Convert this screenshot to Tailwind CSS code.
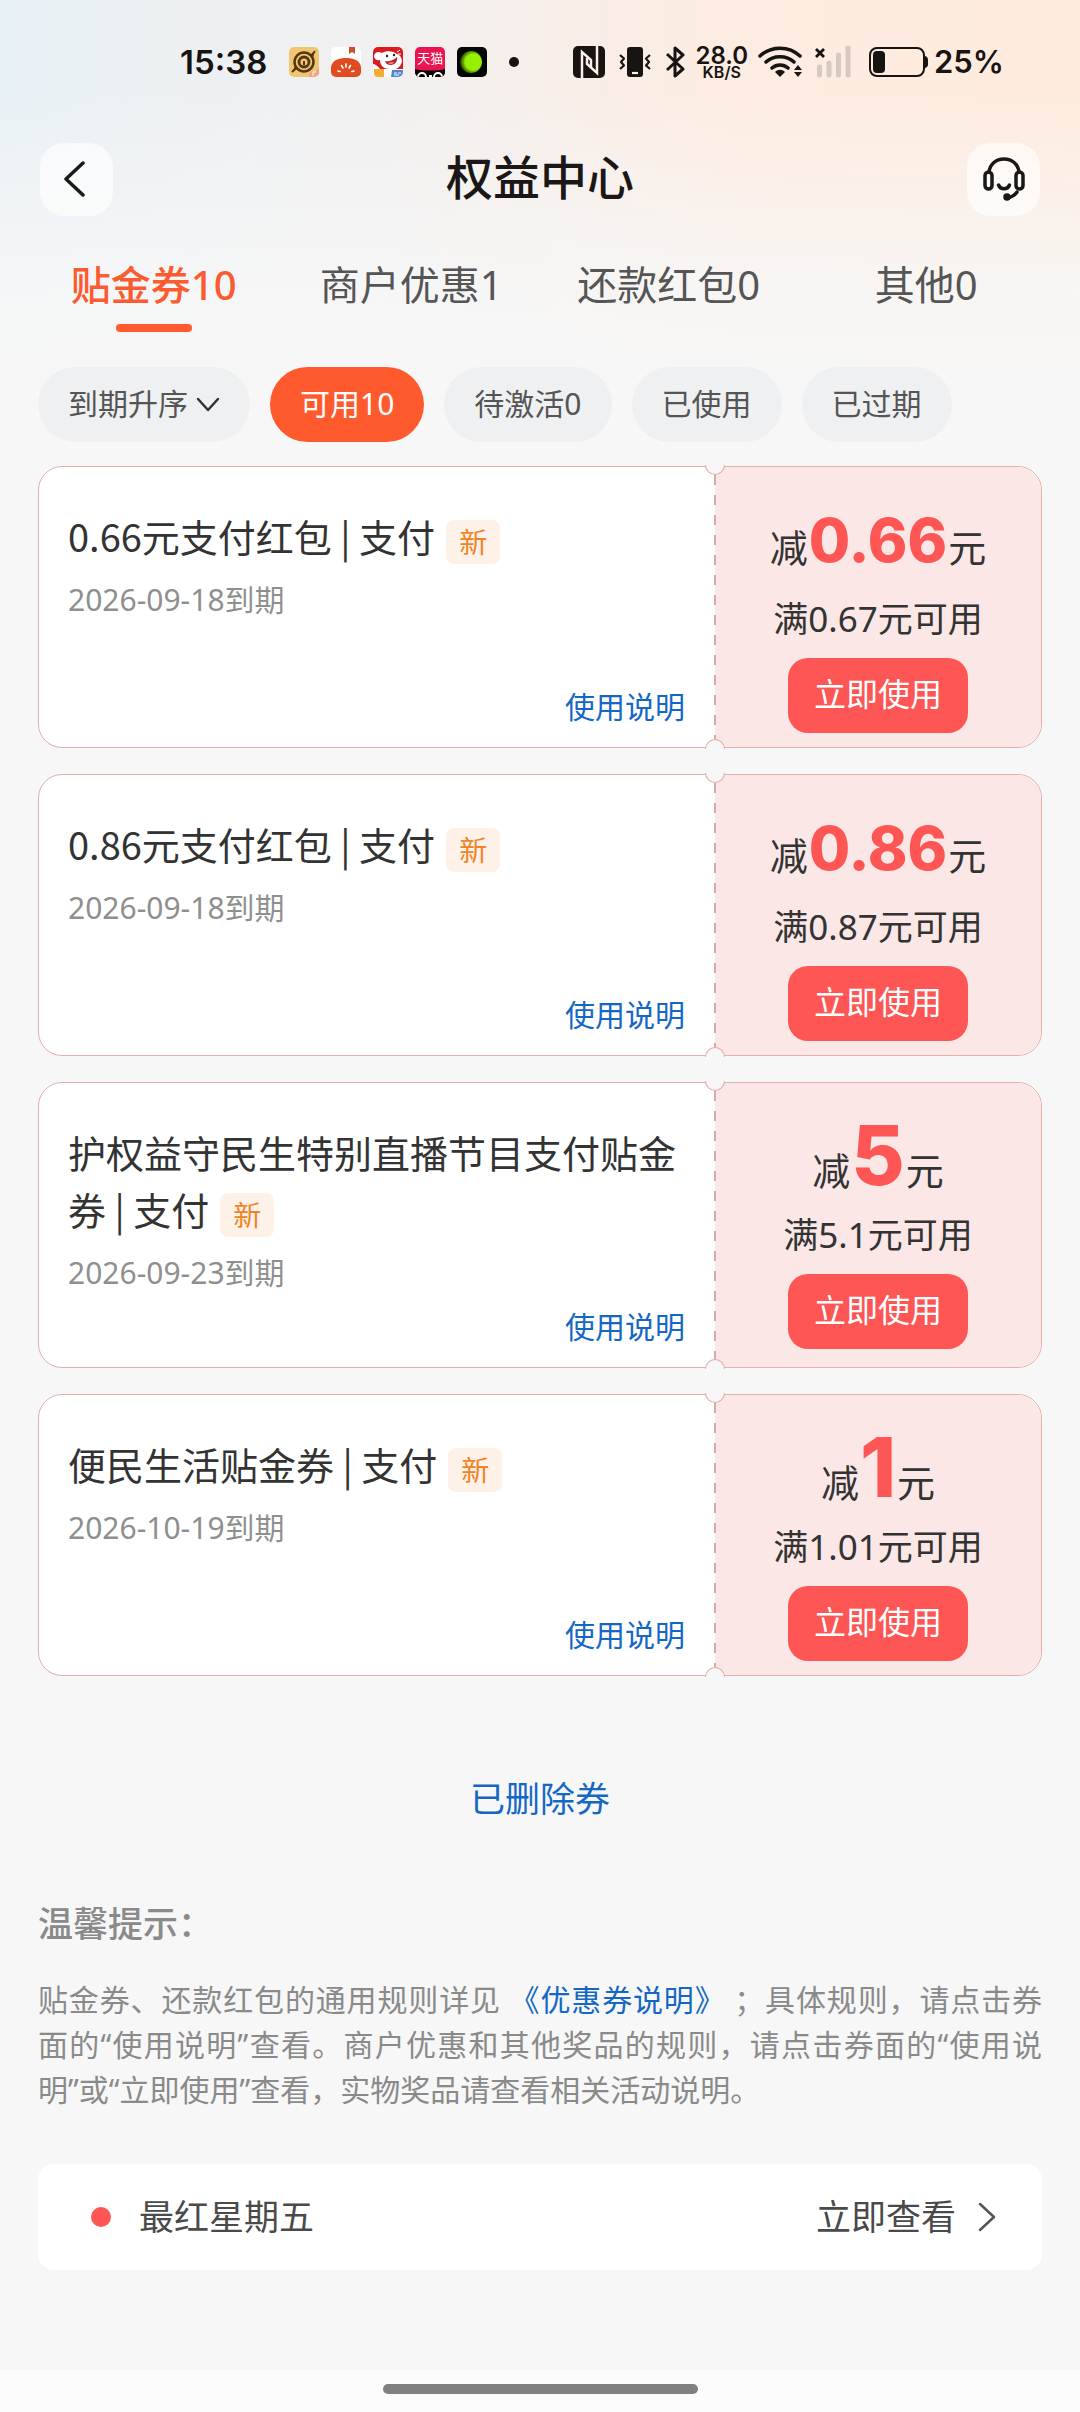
<!DOCTYPE html>
<html lang="zh-CN">
<head>
    <meta charset="UTF-8">
    <meta name="viewport" content="width=device-width, initial-scale=1.0">
    <title>权益中心</title>
    <script src="https://cdn.jsdelivr.net/npm/@tailwindcss/browser@4"></script>
    <style>
        body {
            font-family: 'Noto Sans', 'Noto Sans CJK SC', sans-serif;
            background-color: #f7f7f7;
        }
        /* 顶部左蓝右橙的渐变，向下淡出到页面底色 */
        .page {
            background-image:
                linear-gradient(to bottom, rgba(247, 247, 247, 0) 90px, rgba(247, 247, 247, 0.85) 290px, #f7f7f7 400px),
                linear-gradient(to right, #e8f1f6, #f1f0f0 35%, #fdece1 68%, #feebdd);
            background-size: 100% 460px;
            background-repeat: no-repeat;
        }
        /* 票券标题，竖线分隔符较窄 */
        .coupon-title {
            font-family: 'Noto Sans CJK SC', sans-serif;
        }
        /* 票券中间的虚线 */
        .dash-line {
            background-image: repeating-linear-gradient(to bottom, #d9a8a7 0 10px, transparent 10px 20px);
        }
    </style>
</head>
<body class="text-[#333]">
    <div class="page min-h-screen flex flex-col">

        <!-- 状态栏 -->
        <div class="h-[124px] pl-[180px] pr-[76px] flex items-center justify-between text-[#171412]">
            <div class="flex items-center gap-3">
                <span class="font-['Inter'] font-semibold text-[33px] leading-10 mr-[10px]">15:38</span>
                <svg class="w-[30px] h-[30px]" viewBox="0 0 30 30">
                    <rect width="30" height="30" rx="5" fill="#f0c674"/>
                    <circle cx="15" cy="15" r="9.500" fill="none" stroke="#55370f" stroke-width="2.500"/>
                    <path d="M21 8l5-4-2 7M9 21l-5 4 2-7" fill="#55370f"/>
                    <path d="M3 25L8 20M22 9l4-5" stroke="#55370f" stroke-width="2"/>
                    <circle cx="15" cy="15" r="5" fill="none" stroke="#55370f" stroke-width="2.800"/>
                    <path d="M15 14v4" stroke="#55370f" stroke-width="2"/>
                    <path d="M19 30l3-6 4 1 4-4v4a5 5 0 0 1-5 5z" fill="#f5a184"/>
                    <path d="M24 29v-4h3" stroke="#fff" stroke-width="1" fill="none"/>
                </svg>
                <svg class="w-[30px] h-[30px]" viewBox="0 0 30 30">
                    <rect width="30" height="30" rx="5" fill="#fff"/>
                    <path d="M18 0h6v7l-3-2-3 2z" fill="#c9512d"/>
                    <path d="M0 20C1 13 8 11 15 11s14 2 15 9v5a5 5 0 0 1-5 5H5a5 5 0 0 1-5-5z" fill="#e04c1f"/>
                    <path d="M15 17v3M10.500 18.500l1.500 2.500M19.500 18.500l-1.500 2.500M7 24l2 .5M23 24l-2 .5" stroke="#fff" stroke-width="1.600" stroke-linecap="round"/>
                </svg>
                <svg class="w-[30px] h-[30px]" viewBox="0 0 30 30">
                    <rect width="30" height="30" rx="5" fill="#fff"/>
                    <path d="M5 0h20a5 5 0 0 1 5 5v17H0V5a5 5 0 0 1 5-5z" fill="#dc1a22"/>
                    <path d="M1 9c1-4 4-5 8-3 4-3 12-2 15 1 3 1 5 4 5 7-1 6-5 9-12 8C9 22 7 17 7 13c-3 1-6-1-6-4z" fill="#fff"/>
                    <path d="M0 17c2 0 5 2 7 5H0z" fill="#fff"/>
                    <circle cx="14" cy="9" r="1.200" fill="#222"/><circle cx="21" cy="8" r="1.200" fill="#222"/>
                    <path d="M12 14c4 1 9-1 12-4 1 4-2 8-6 8-3 0-5-1-6-4z" fill="#b5252b"/>
                    <path d="M15 16c2-1 4-1 6-1-1 2-4 3-6 1z" fill="#f08a8a"/>
                    <path d="M24 5l3-2M25 7h3" stroke="#fff" stroke-width="1"/>
                    <path d="M1 22h10v8H5a4 4 0 0 1-4-4z" fill="#f3ae31"/>
                    <path d="M19 23h11v2a5 5 0 0 1-5 5h-7z" fill="#4f86cf"/>
                    <path d="M21 26h3M25 26h3M21 28h5" stroke="#fff" stroke-width="1"/>
                </svg>
                <div class="relative w-[30px] h-[30px] rounded-[5px] overflow-hidden bg-[#ea1550] text-white text-center">
                    <span class="block text-[13px] leading-[22px]">天猫</span>
                    <svg class="absolute bottom-0 left-0 w-[30px] h-[8px]" viewBox="0 0 30 8">
                        <path d="M0 0c8 2 22 2 30 0v8H0z" fill="#0b0506"/>
                        <path d="M3 8a4 4 0 0 1 8 0M19 8a4 4 0 0 1 8 0" fill="none" stroke="#fff" stroke-width="2"/>
                        <path d="M14 7h3" stroke="#fff" stroke-width="2"/>
                    </svg>
                </div>
                <svg class="w-[30px] h-[30px]" viewBox="0 0 30 30">
                    <defs>
                        <radialGradient id="ball" cx="60%" cy="50%" r="60%">
                            <stop offset="0.600" stop-color="#95f003"/>
                            <stop offset="1" stop-color="#1d3300"/>
                        </radialGradient>
                    </defs>
                    <rect width="30" height="30" rx="5" fill="#040602"/>
                    <circle cx="14" cy="15" r="11" fill="url(#ball)"/>
                </svg>
                <span class="ml-[10px] w-[10px] h-[10px] rounded-full bg-[#171412]"></span>
            </div>

            <div class="flex items-center">
                <svg class="w-8 h-8" viewBox="0 0 32 32" fill="none">
                    <rect width="32" height="32" rx="5" fill="#171412"/>
                    <path d="M9 32V6l9 8v8M24 0v27l-10-9v-6" stroke="#fdf0e8" stroke-width="2.500"/>
                </svg>
                <svg class="ml-[14px] w-8 h-8" viewBox="0 0 32 32" fill="none" stroke="#171412" stroke-width="2.200" stroke-linejoin="round">
                    <rect x="8" y="1" width="16" height="30" rx="3" fill="#171412" stroke="none"/>
                    <path d="M13 27h6" stroke="#fdf0e8"/>
                    <path d="M1 9l4 3.500L2 16l3 3.500L1 23M31 9l-4 3.500 3 3.500-3 3.500 4 3.500"/>
                </svg>
                <svg class="ml-[14px] w-5 h-8" viewBox="0 0 20 32" fill="none" stroke="#171412" stroke-width="3" stroke-linejoin="round">
                    <path d="M2 8l16 15-8 7V2l8 7L2 24"/>
                </svg>
                <div class="ml-[10px] font-['Inter'] font-semibold text-center">
                    <div class="text-[24px] leading-[19px]">28.0</div>
                    <div class="text-[16px] leading-[14px]">KB/S</div>
                </div>
                <svg class="ml-[10px] w-[46px] h-8" viewBox="0 0 46 32" fill="none" stroke="#171412" stroke-width="3.500" stroke-linecap="round">
                    <path d="M2 10c11-10.500 29-10.500 40 0M8 16c7.500-7 20.500-7 28 0M14 22c4.500-4 11.500-4 16 0"/>
                    <path d="M22 31l-5-5c3-3 7-3 10 0z" fill="#171412" stroke="none"/>
                    <path d="M36 24l4-5 4 5zM36 26h8l-4 5z" fill="#171412" stroke="none"/>
                </svg>
                <svg class="ml-[11px] w-9 h-8" viewBox="0 0 36 32" fill="none">
                    <path d="M4.500 21v8M14 17v12M23.500 9v20M33 2v27" stroke="#d6c9c2" stroke-width="5" stroke-linecap="round"/>
                    <path d="M1 3l8 8M9 3l-8 8" stroke="#171412" stroke-width="2.800"/>
                </svg>
                <svg class="ml-[18px] w-[60px] h-[30px]" viewBox="0 0 60 30">
                    <rect x="1" y="1" width="54" height="28" rx="7" fill="none" stroke="#171412" stroke-width="2"/>
                    <rect x="4" y="4" width="12" height="22" rx="4" fill="#171412"/>
                    <path d="M56 9a4 4 0 0 1 3 4v4a4 4 0 0 1-3 4z" fill="#171412"/>
                </svg>
                <span class="ml-[5px] font-['Inter'] font-semibold text-[31px] leading-10">25%</span>
            </div>
        </div>

        <!-- 标题栏 -->
        <header class="h-[110px] px-[40px] flex items-center justify-between">
            <button type="button" aria-label="返回" class="w-[73px] h-[73px] rounded-3xl bg-white/60 flex items-center justify-center">
                <svg class="mr-1 w-[22px] h-9" viewBox="0 0 22 36" fill="none" stroke="#1a1a1a" stroke-width="3.500" stroke-linecap="round" stroke-linejoin="round">
                    <path d="M19 2L2 18l17 16"/>
                </svg>
            </button>
            <h1 class="pb-1 text-[47px] leading-[64px] font-medium text-[#1a1716]">权益中心</h1>
            <button type="button" aria-label="客服" class="w-[73px] h-[73px] rounded-3xl bg-white/60 flex items-center justify-center">
                <svg class="w-[42px] h-11" viewBox="0 0 42 44" fill="none" stroke="#1a1716" stroke-width="3.500" stroke-linecap="round" stroke-linejoin="round">
                    <path d="M6 15C7 7 13 2 21 2s14 5 15 13"/>
                    <rect x="2" y="15" width="7" height="17" rx="3.500"/>
                    <rect x="33" y="15" width="7" height="17" rx="3.500"/>
                    <path d="M15.500 28c2 5 9 5 11 0"/>
                    <path d="M34 35c-2 3-5 5-9 6"/>
                    <circle cx="24" cy="40" r="2" fill="#1a1716"/>
                </svg>
            </button>
        </header>

        <!-- 分类标签 -->
        <nav role="tablist" class="px-[25px] pt-[25px] grid grid-cols-4 text-[40px] leading-[52px] text-[#555]">
            <button type="button" role="tab" aria-selected="true" class="flex flex-col items-center font-medium text-[#fb5b30]">
                贴金券10
                <span class="mt-[13px] w-[76px] h-2 rounded-full bg-[#ff5a2d]"></span>
            </button>
            <button type="button" role="tab" class="self-start">商户优惠1</button>
            <button type="button" role="tab" class="self-start">还款红包0</button>
            <button type="button" role="tab" class="self-start">其他0</button>
        </nav>

        <!-- 筛选 -->
        <div class="mt-[35px] px-[38px] flex gap-[20px] text-[30px] leading-[73px] text-[#555]">
            <label class="relative">
                <select aria-label="排序" class="appearance-none h-[75px] pl-[30px] pr-[62px] pb-[2px] rounded-full bg-[#eff0f2]">
                    <option>到期升序</option>
                </select>
                <svg class="absolute right-[30px] top-[30px] w-6 h-4 pointer-events-none" viewBox="0 0 24 16" fill="none" stroke="#333" stroke-width="2.500" stroke-linecap="round" stroke-linejoin="round">
                    <path d="M2 2l10 11L22 2"/>
                </svg>
            </label>
            <button type="button" class="h-[75px] pb-[2px] px-[30px] rounded-full bg-[#ff5a2d] text-white">可用10</button>
            <button type="button" class="h-[75px] pb-[2px] px-[30px] rounded-full bg-[#eff0f2]">待激活0</button>
            <button type="button" class="h-[75px] pb-[2px] px-[30px] rounded-full bg-[#eff0f2]">已使用</button>
            <button type="button" class="h-[75px] pb-[2px] px-[30px] rounded-full bg-[#eff0f2]">已过期</button>
        </div>

        <main class="px-[38px]">
            <ul id="coupon-list" class="mt-6 flex flex-col gap-[26px]"></ul>

            <div class="mt-[98px] text-center">
                <a href="#" class="text-[35px] leading-[50px] text-[#1467c4]">已删除券</a>
            </div>

            <section class="mt-[75px] text-[#8a8a8a]">
                <h2 class="text-[35px] leading-[50px] font-medium">温馨提示：</h2>
                <p class="mt-7 text-[30px] leading-[45px] text-justify">贴金券、还款红包的通用规则详见 <a href="#" class="text-[#1467c4]">《优惠券说明》</a> ；具体规则，请点击券面的“使用说明”查看。商户优惠和其他奖品的规则，请点击券面的“使用说<span class="whitespace-nowrap">明”或“立</span>即使用”查看，实物奖品请查看相关活动说明。</p>
            </section>

            <a href="#" class="mt-[52px] h-[106px] pl-[53px] pr-[46px] rounded-2xl bg-white flex items-center text-[35px] text-[#4a4a4a]">
                <span class="w-5 h-5 rounded-full bg-[#fd5654]"></span>
                <span class="ml-7">最红星期五</span>
                <span class="ml-auto">立即查看</span>
                <svg class="ml-[22px] w-[18px] h-[30px]" viewBox="0 0 18 30" fill="none" stroke="#555" stroke-width="2.500" stroke-linecap="round" stroke-linejoin="round">
                    <path d="M2 2l14 13L2 28"/>
                </svg>
            </a>
        </main>

        <!-- 底部手势条 -->
        <div class="mt-auto h-[42px] pb-1 bg-[#fcfcfc] flex items-center justify-center">
            <span class="w-[315px] h-[10px] rounded-full bg-[#808080]"></span>
        </div>
    </div>

    <script>
        const coupons = [
            { name: "0.66元支付红包 | 支付", expire: "2026-09-18到期", amount: "0.66", limit: "满0.67元可用" },
            { name: "0.86元支付红包 | 支付", expire: "2026-09-18到期", amount: "0.86", limit: "满0.87元可用" },
            { name: "护权益守民生特别直播节目支付贴金券 | 支付", expire: "2026-09-23到期", amount: "5", limit: "满5.1元可用" },
            { name: "便民生活贴金券 | 支付", expire: "2026-10-19到期", amount: "1", limit: "满1.01元可用" }
        ];

        const list = document.getElementById('coupon-list');

        coupons.forEach((item) => {
            // 小数金额位数多，用小一号的字
            const amountSize = item.amount.includes('.') ? 'text-[60px]' : 'text-[82px]';
            list.innerHTML += `
                <li class="relative flex rounded-3xl border border-[#e6adab] bg-white">
                    <div class="flex-1 flex flex-col pt-10 pb-[18px] pl-[29px] pr-[30px]">
                        <h3 class="coupon-title text-[38px] leading-[57px]">${item.name}<span class="ml-[11px] inline-block align-middle h-11 px-[13px] rounded-lg bg-[#fef1e8] text-[28px] leading-[42px] text-[#f08326]">新</span></h3>
                        <p class="mt-[13px] text-[30px] leading-[45px] text-[#8f8f8f]">${item.expire}</p>
                        <a href="#" class="mt-auto pt-[9px] self-end text-[30px] leading-[45px] text-[#1467c4]">使用说明</a>
                    </div>
                    <div class="relative w-[326px] flex flex-col items-center pt-[31px] pb-[14px] rounded-r-3xl bg-[#fae7e6]">
                        <span class="dash-line absolute left-[-1px] inset-y-[8px] w-[2px]"></span>
                        <span class="absolute left-[-10px] top-[-2px] w-5 h-[10px] rounded-b-full border border-t-0 border-[#e0abaa] bg-[#f7f7f7]"></span>
                        <span class="absolute left-[-10px] bottom-[-2px] w-5 h-[10px] rounded-t-full border border-b-0 border-[#e0abaa] bg-[#f7f7f7]"></span>
                        <div class="h-[84px] flex items-center">
                            <p class="flex items-baseline gap-[1px] text-[38px] leading-none">减<strong class="font-['Inter'] font-extrabold ${amountSize} leading-none text-[#fd5654]">${item.amount}</strong>元</p>
                        </div>
                        <p class="mt-3 text-[35px] leading-[50px]">${item.limit}</p>
                        <button type="button" class="mt-[14px] h-[75px] px-[26px] pb-[3px] rounded-[20px] bg-[#fd5654] text-[32px] text-white">立即使用</button>
                    </div>
                </li>
            `;
        });
    </script>
</body>
</html>
